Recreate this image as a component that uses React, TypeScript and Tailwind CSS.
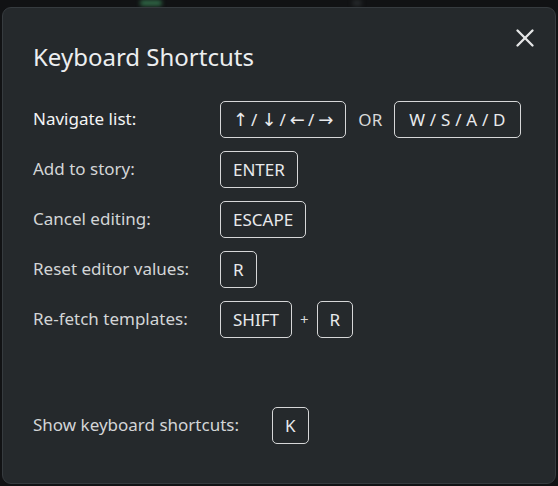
import { X } from "lucide-react";

type Row = { label: string; keys: string[]; bright?: boolean };

const rows: Row[] = [
  { label: "Navigate list:", keys: ["ARROWS", "OR", "W / S / A / D"], bright: true },
  { label: "Add to story:", keys: ["ENTER"] },
  { label: "Cancel editing:", keys: ["ESCAPE"] },
  { label: "Reset editor values:", keys: ["R"] },
  { label: "Re-fetch templates:", keys: ["SHIFT", "+", "R"] },
];

function Key({ children, wide }: { children: React.ReactNode; wide?: boolean }) {
  return (
    <span
      className={`inline-flex h-[37px] items-center rounded-[5px] border border-[#d6d7d8] text-[17px] leading-none text-[#e9eaec] ${
        wide ? "px-[14px] tracking-[0.2px]" : "px-3"
      }`}
    >
      {children}
    </span>
  );
}

function Arrows() {
  const arrows = ["↑", "↓", "←", "→"];
  return (
    <span className="flex items-center gap-[4px]">
      {arrows.map((a, i) => (
        <span key={a} className="flex items-center gap-[3px]">
          <span
            className="text-[18px] leading-none text-[#e9eaec]"
            style={{ fontFamily: '"DejaVu Sans", sans-serif' }}
          >
            {a}
          </span>
          {i < arrows.length - 1 && <span>/</span>}
        </span>
      ))}
    </span>
  );
}

function Sep({ text }: { text: string }) {
  if (text === "+") {
    return <span className="px-[8px] text-[15px] text-[#d8d9da]">+</span>;
  }
  return <span className="px-3 text-[17px] text-[#d8d9da]">{text}</span>;
}

export default function App() {
  return (
    <div
      className="flex h-[486px] w-[558px] flex-col bg-[#111214]"
      style={{ fontFamily: '"Noto Sans", "Open Sans", sans-serif' }}
    >
      <div className="flex h-[7px] shrink-0">
        <div className="ml-[140px] h-[6px] w-[22px] rounded-full bg-[#2f6645] blur-[2px]" />
        <div className="ml-[190px] h-[6px] w-[10px] rounded-full bg-[#26292b] blur-[2px]" />
      </div>
      <div className="relative mx-[2px] mb-[2px] flex flex-1 flex-col rounded-[9px] border border-[#363b3f] bg-[#25292c] pl-[30px] pt-[33px]">
        <button className="absolute right-[15px] top-[15px] text-[#e4e5e6]">
          <X size={30} strokeWidth={1.9} />
        </button>
        <h2 className="text-[24px] leading-[32px] text-[#eceef0]">Keyboard Shortcuts</h2>

        <div className="mt-[28px] flex flex-col gap-[13px]">
          {rows.map((r) => (
            <div key={r.label} className="flex items-center">
              <span
                className={`w-[187px] pb-[2px] text-[17px] ${
                  r.bright ? "text-[#f3f4f5]" : "text-[#d3d5d7]"
                }`}
              >
                {r.label}
              </span>
              {r.keys.map((k, i) =>
                k === "OR" || k === "+" ? (
                  <Sep key={i} text={k} />
                ) : (
                  <Key key={i} wide={k.startsWith("W")}>
                    {k === "ARROWS" ? <Arrows /> : k}
                  </Key>
                )
              )}
            </div>
          ))}
        </div>

        <div className="mt-[69px] flex items-center">
          <span className="mr-[33px] pb-[2px] text-[17px] text-[#d3d5d7]">Show keyboard shortcuts:</span>
          <Key>K</Key>
        </div>
      </div>
    </div>
  );
}
